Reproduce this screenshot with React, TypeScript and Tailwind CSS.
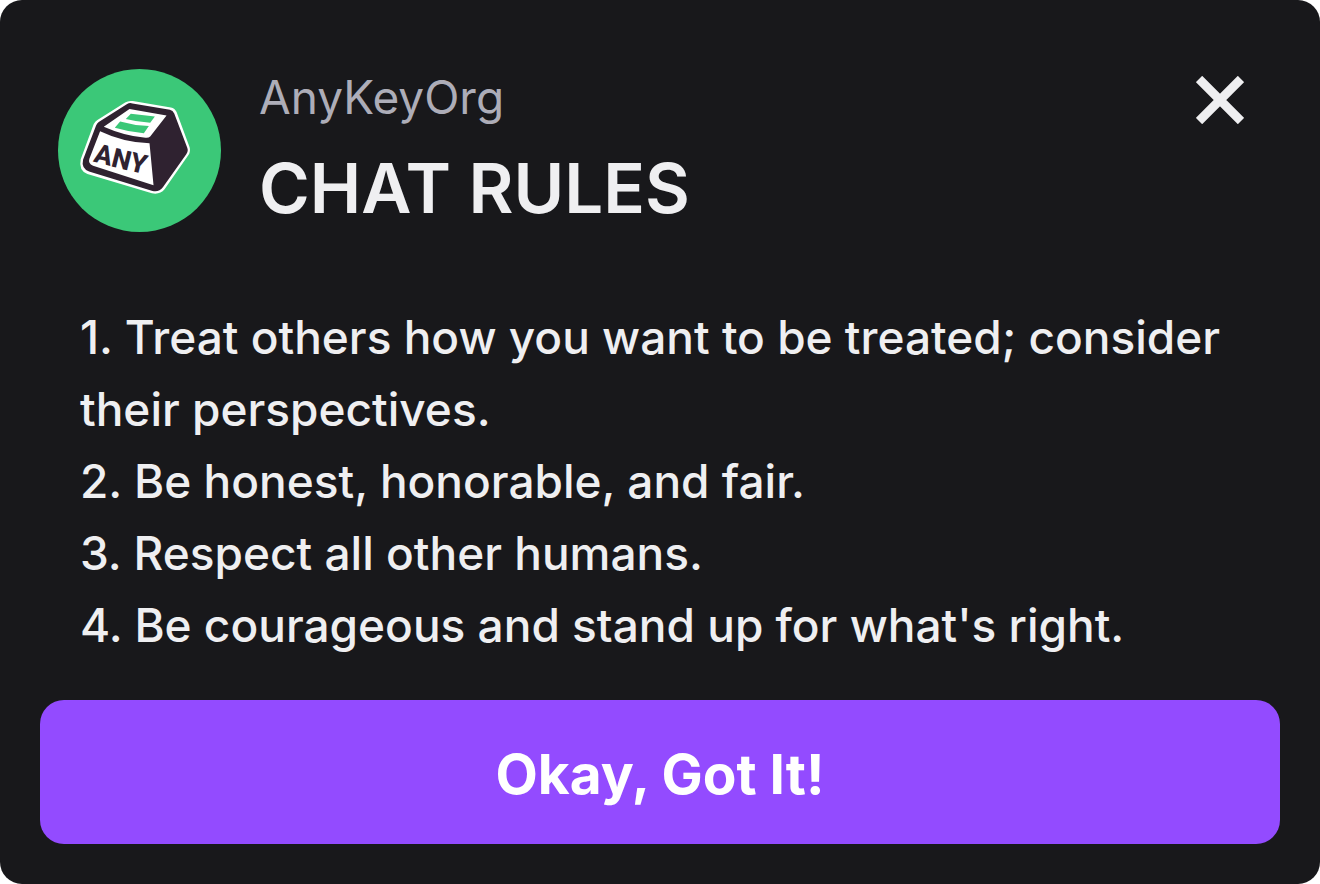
const rules = [
  'Treat others how you want to be treated; consider their perspectives.',
  'Be honest, honorable, and fair.',
  'Respect all other humans.',
  "Be courageous and stand up for what's right.",
];

function Avatar() {
  return (
    <svg viewBox="25 27 488 488" className="size-[163px] shrink-0" role="img" aria-label="AnyKeyOrg avatar">
      <circle cx="269" cy="271" r="244" fill="#3bc878" />
      <path
        d="M226 127Q236 121 249 123L363 142Q375 144 380 156L419 261Q423 274 415 285L344 387Q330 404 306 399L113 341Q86 331 93 297L132 192Q136 184 143 180Z"
        fill="#fff"
      />
      <path
        d="M232 132Q239 127 248 130L360 149Q369 151 373 160L412 263Q416 273 409 282L339 381Q327 397 308 392L118 334Q94 325 100 299L139 196Q142 190 147 186Z"
        fill="#2f2230"
      />
      <path d="M239 147L350 166L301 229Q296 234 287 233Q225 228 162 200Z" fill="#fff" />
      <path d="M243 161L315 169L301 188Q262 186 228 177Z" fill="#3bc878" />
      <path d="M211 184Q253 196 297 198L282 219Q238 216 195 203Z" fill="#3bc878" />
      <path d="M151 213Q222 247 299 249L311 375L130 317Q114 310 119 296Z" fill="#fff" />
      <text
        x="129"
        y="304"
        transform="rotate(14 129 304)"
        className="font-['Roboto',sans-serif] text-[80px] font-extrabold"
        fill="#2f2230"
      >
        ANY
      </text>
    </svg>
  );
}

export default function App() {
  return (
    <main className="flex min-h-screen flex-col rounded-[22px] bg-[#18181b] px-10 pb-10 font-['Inter','Liberation_Sans',sans-serif] text-[#efeff1]">
      <header className="flex items-start pt-[69px] pr-9 pl-[18px]">
        <Avatar />
        <div className="ml-[38px] flex-1">
          <p className="text-[46px] leading-[56px] text-[#adadb8]">AnyKeyOrg</p>
          <h1 className="mt-5 text-[69px] leading-[86px] font-semibold">CHAT RULES</h1>
        </div>
        <button type="button" aria-label="Close" className="mt-[7px]">
          <svg viewBox="0 0 48 48" className="size-12" fill="none" stroke="currentColor" strokeWidth="9">
            <path d="M3 3L45 45M45 3L3 45" />
          </svg>
        </button>
      </header>
      <ol className="mt-[69px] px-10 text-[46px] leading-[72px] font-medium">
        {rules.map((rule, index) => (
          <li key={rule}>{`${index + 1}. ${rule}`}</li>
        ))}
      </ol>
      <button
        type="button"
        className="mt-auto h-36 w-full rounded-3xl bg-[#934bff] pt-1 text-[55px] leading-[72px] font-bold text-white"
      >
        Okay, Got It!
      </button>
    </main>
  );
}
